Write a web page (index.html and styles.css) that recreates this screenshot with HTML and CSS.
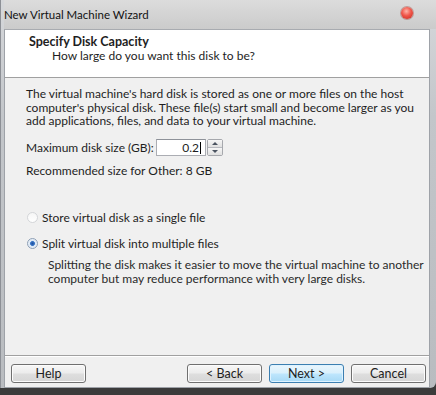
FILE: index.html
```html
<!DOCTYPE html>
<html lang="en">
  <head>
    <meta charset="UTF-8" />
    <title>New Virtual Machine Wizard</title>
    <link rel="stylesheet" href="styles.css">
  </head>
  <body>
    <div class="window">
      <div class="titlebar">
        <span class="title">New Virtual Machine Wizard</span>
        <span class="close-btn"></span>
      </div>

      <div class="client">
        <div class="header">
          <div class="header-title">Specify Disk Capacity</div>
          <div class="header-sub">How large do you want this disk to be?</div>
        </div>

        <div class="content">
          <p class="intro">
            The virtual machine's hard disk is stored as one or more files on the host<br />
            computer's physical disk. These file(s) start small and become larger as you<br />
            add applications, files, and data to your virtual machine.
          </p>

          <div class="size-row">
            <label for="diskSize">Maximum disk size (GB):</label>
            <div class="spin-box">
              <div class="spin-input" id="diskSize">0.2<span class="caret"></span></div>
              <div class="spin-buttons">
                <span class="spin-btn"><span class="arrow-up"></span></span>
                <span class="spin-btn"><span class="arrow-down"></span></span>
              </div>
            </div>
          </div>

          <div class="recommended">Recommended size for Other: 8 GB</div>

          <div class="radio-group">
            <div class="radio-row">
              <span class="radio"></span>
              <span>Store virtual disk as a single file</span>
            </div>
            <div class="radio-row">
              <span class="radio checked"></span>
              <span>Split virtual disk into multiple files</span>
            </div>
            <p class="radio-desc">
              Splitting the disk makes it easier to move the virtual machine to another<br />
              computer but may reduce performance with very large disks.
            </p>
          </div>
        </div>

        <div class="footer">
          <button type="button" class="btn">Help</button>
          <div class="nav-buttons">
            <button type="button" class="btn">&lt; Back</button>
            <button type="button" class="btn btn-default">Next &gt;</button>
            <button type="button" class="btn">Cancel</button>
          </div>
        </div>
      </div>
    </div>
  </body>
</html>
```

FILE: styles.css
```css
body {
  margin: 0;
  width: 436px;
  height: 395px;
  background-color: #3b3b3b;
  font-family: Lato, "Liberation Sans", sans-serif;
  font-size: 12px;
  color: #1e1e1e;
  overflow: hidden;
  white-space: nowrap;
}

.window {
  width: 436px;
  height: 388px;
  box-sizing: border-box;
  padding: 0 6px 0 3px;
  display: flex;
  flex-direction: column;
  background: linear-gradient(to bottom, #d6d8db 0%, #c3c6ca 30%, #b9bcc0 100%);
  border-left: 1px solid #8d9096;
  border-bottom-right-radius: 6px;
}

.titlebar {
  height: 29px;
  display: flex;
  align-items: center;
  justify-content: space-between;
  background: linear-gradient(to bottom, #dcdcdc, #cbcbcb);
  margin-right: -6px;
  padding-right: 23px;
}

.title {
  font-size: 11.5px;
  color: #111;
}

.close-btn {
  width: 12px;
  height: 12px;
  border-radius: 50%;
  margin-top: -4px;
  background: radial-gradient(circle at 45% 35%, #ffb4a8 0%, #f0564a 45%, #c6261c 100%);
  box-shadow: 0 0 0 1px rgba(150, 40, 30, 0.35);
}

.client {
  flex: 1;
  display: flex;
  flex-direction: column;
  background-color: #f0f0f0;
  border: 1px solid #9ea2a8;
  border-top-color: #a8abb0;
}

.header {
  height: 48px;
  box-sizing: border-box;
  background-color: #fff;
  border-bottom: 1px solid #a0a0a0;
  padding: 5px 0 0 24px;
}

.header-title {
  font-weight: bold;
  font-size: 12.5px;
  line-height: 14px;
}

.header-sub {
  line-height: 14px;
  margin-left: 23px;
}

.content {
  flex: 1;
  padding: 9px 0 0 21px;
}

.intro {
  margin: 0;
  line-height: 13.5px;
}

.size-row {
  display: flex;
  align-items: center;
  margin-top: 11px;
}

.size-row label {
  width: 130px;
}

.spin-box {
  display: flex;
  height: 17px;
}

.spin-input {
  width: 50px;
  height: 17px;
  box-sizing: border-box;
  border: 1px solid #abadb3;
  border-top-color: #8e9299;
  background-color: #fff;
  text-align: right;
  padding-right: 4px;
  line-height: 15px;
}

.caret {
  display: inline-block;
  width: 1px;
  height: 12px;
  background-color: #000;
  vertical-align: -2px;
  margin-left: 1px;
}

.spin-buttons {
  display: flex;
  flex-direction: column;
  margin-left: 1px;
  width: 16px;
  border: 1px solid #a6a8ad;
  border-radius: 2px;
  box-sizing: border-box;
}

.spin-btn {
  flex: 1;
  display: flex;
  align-items: center;
  justify-content: center;
  background: linear-gradient(to bottom, #f6f6f6, #e0e0e0);
}

.spin-btn + .spin-btn {
  border-top: 1px solid #b8bac0;
}

.arrow-up,
.arrow-down {
  width: 0;
  height: 0;
  border-left: 3px solid transparent;
  border-right: 3px solid transparent;
}

.arrow-up {
  border-bottom: 3px solid #4a5360;
}

.arrow-down {
  border-top: 3px solid #4a5360;
}

.recommended {
  margin-top: 8px;
  line-height: 14px;
}

.radio-group {
  margin-top: 33px;
}

.radio-row {
  display: flex;
  align-items: center;
  gap: 4px;
  line-height: 14px;
  margin-left: 1px;
  height: 14px;
}

.radio-row + .radio-row {
  margin-top: 12px;
}

.radio {
  width: 11px;
  height: 11px;
  border-radius: 50%;
  box-sizing: border-box;
  border: 1px solid #d4d6d9;
  background: linear-gradient(to bottom, #f6f6f6, #ffffff);
}

.radio.checked {
  border-color: #8e9fb5;
  background: radial-gradient(circle, #1f4f9e 0%, #3b78c8 34%, #d9e6f5 40%, #f4f7fb 100%);
}

.radio-desc {
  margin: 7px 0 0 22px;
  line-height: 14px;
  color: #2a2a2a;
}

.footer {
  height: 32px;
  box-sizing: border-box;
  border-top: 1px solid #a0a0a0;
  box-shadow: inset 0 1px 0 #fff;
  display: flex;
  align-items: flex-start;
  justify-content: space-between;
  padding: 8px 3px 0 6px;
}

.nav-buttons {
  display: flex;
  gap: 7px;
}

.btn {
  width: 75px;
  height: 19px;
  padding: 0;
  font-family: inherit;
  font-size: 12.5px;
  color: #1e1e1e;
  border: 1px solid #707070;
  border-radius: 3px;
  background: linear-gradient(to bottom, #f7f7f7 0%, #ececec 48%, #dedede 52%, #d6d6d6 100%);
  box-shadow: inset 0 0 0 1px #fcfcfc;
  line-height: 15px;
}

.btn-default {
  border-color: #3c7fb1;
  background: linear-gradient(to bottom, #eaf6fd 0%, #d9f0fc 48%, #bee6fd 52%, #a7d9f5 100%);
  box-shadow: inset 0 0 0 1px #dff3ff;
}
```
